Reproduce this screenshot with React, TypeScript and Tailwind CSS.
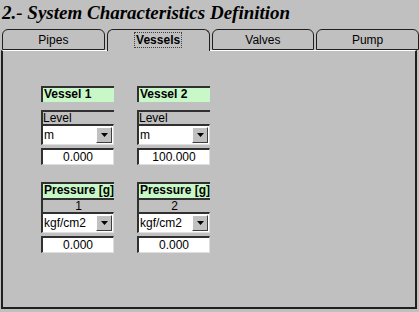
import React from "react";

const sans = { fontFamily: '"Liberation Sans", Arial, sans-serif' };

function GreenLabel({ text }: { text: string }) {
  return (
    <div
      className="h-[16px] bg-[#c8f8c8] border-t-2 border-l-2 border-[#303030] text-[12px] font-bold leading-[13px] text-black pl-[1px] whitespace-nowrap overflow-hidden"
      style={sans}
    >
      {text}
    </div>
  );
}

function GrayLabel({ text, center }: { text: string; center?: boolean }) {
  return (
    <div
      className={
        "h-[14px] bg-[#c0c0c0] border-t-2 border-l-2 border-[#303030] text-[12px] leading-[12px] text-black " +
        (center ? "text-center" : "")
      }
      style={sans}
    >
      {text}
    </div>
  );
}

function Select({ value }: { value: string }) {
  return (
    <div className="h-[21px] bg-white border-t-2 border-l-2 border-[#303030] border-r border-b border-r-[#dfdfdf] border-b-[#dfdfdf] flex items-center">
      <div className="flex-1 text-[12px] leading-[14px] text-black pl-[1px]" style={sans}>
        {value}
      </div>
      <div className="w-[16px] h-[16px] mr-[1px] bg-[#c0c0c0] border-t border-l border-white border-r border-b border-r-[#404040] border-b-[#404040] flex items-center justify-center">
        <svg width="7" height="4" viewBox="0 0 7 4">
          <path d="M0 0 H7 L3.5 4 Z" fill="#000" />
        </svg>
      </div>
    </div>
  );
}

function Input({ value }: { value: string }) {
  return (
    <div
      className="h-[17px] bg-white border-t-2 border-l-2 border-[#303030] border-r border-b border-r-[#dfdfdf] border-b-[#dfdfdf] text-[12px] leading-[14px] text-center text-black"
      style={sans}
    >
      {value}
    </div>
  );
}

function Column({ title, p, level }: { title: string; p: string; level: string }) {
  return (
    <div className="w-[73px] flex flex-col">
      <GreenLabel text={title} />
      <div className="h-[8px]" />
      <GrayLabel text="Level" />
      <Select value="m" />
      <div className="h-[3px]" />
      <Input value={level} />
      <div className="h-[17px]" />
      <GreenLabel text="Pressure [g]" />
      <GrayLabel text={p} center />
      <Select value="kgf/cm2" />
      <div className="h-[3px]" />
      <Input value="0.000" />
    </div>
  );
}

function Tab({ label, active }: { label: string; active?: boolean }) {
  return (
    <div
      className={
        "w-[103px] rounded-t-[6px] border-t border-l border-r border-[#202020] flex items-start justify-center pt-[3px] bg-[#c0c0c0] " +
        (active ? "h-[22px] -mb-[1px] relative z-10" : "h-[21px] border-b border-b-[#202020]")
      }
    >
      <span
        className={
          "text-[12px] leading-[14px] text-black " +
          (active ? "font-bold outline-1 outline-dotted outline-[#404040] px-[1px]" : "")
        }
        style={sans}
      >
        {label}
      </span>
    </div>
  );
}

export default function App() {
  return (
    <div className="w-[419px] h-[312px] bg-[#c0c0c0] overflow-hidden flex flex-col">
      <div
        className="h-[29px] pl-[2px] pt-[2px] text-[19px] font-bold italic leading-[22px] text-black"
        style={{ fontFamily: '"Liberation Serif", "Times New Roman", serif' }}
      >
        2.- System Characteristics Definition
      </div>
      <div className="flex items-end pl-[2px] gap-[2px] h-[21px]">
        <Tab label="Pipes" />
        <Tab label="Vessels" active />
        <Tab label="Valves" />
        <Tab label="Pump" />
      </div>
      <div className="ml-[1px] w-[416px] h-[259px] border-l-2 border-r-2 border-b-2 border-[#202020] border-t border-t-white bg-[#c0c0c0] flex gap-[23px] pl-[38px] pt-[35px]">
        <Column title="Vessel 1" p="1" level="0.000" />
        <Column title="Vessel 2" p="2" level="100.000" />
      </div>
    </div>
  );
}
